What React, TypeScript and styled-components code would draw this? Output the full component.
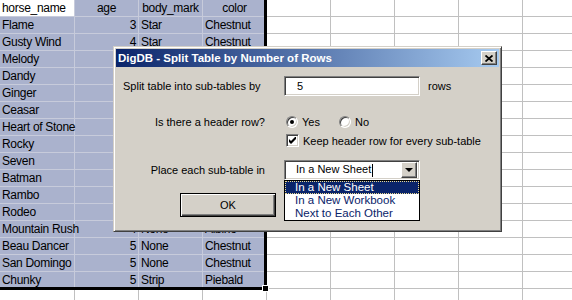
import React from 'react'
import styled, { createGlobalStyle, css } from 'styled-components'

const GlobalStyle = createGlobalStyle`
  html, body {
    margin: 0;
    padding: 0;
    background: #ffffff;
    overflow: hidden;
  }
`

const sunken = css`
  border: 1px solid;
  border-color: #808080 #ffffff #ffffff #808080;
  box-shadow: inset 1px 1px 0 #404040, inset -1px -1px 0 #d4d0c8;
`

const raised = css`
  border: 1px solid;
  border-color: #ffffff #404040 #404040 #ffffff;
  box-shadow: inset -1px -1px 0 #808080, inset 1px 1px 0 #d4d0c8;
`

/* spreadsheet */
const Page = styled.div`
  position: relative;
  width: 572px;
  height: 300px;
  overflow: hidden;
`

const Sheet = styled.div`
  display: grid;
  grid-template-columns: 75px repeat(8, 64px);
  grid-auto-rows: 17px;
  font-family: 'Liberation Sans', Arial, sans-serif;
  font-size: 12px;
  letter-spacing: -0.3px;
  color: #000;
`

const Cell = styled.div<{ $selected?: boolean; $active?: boolean; $align?: 'left' | 'right' | 'center'; $spill?: boolean }>`
  position: relative;
  box-sizing: border-box;
  border-right: 1px solid ${(p) => (p.$selected ? '#c7cbdb' : '#c0c0c0')};
  border-bottom: 1px solid ${(p) => (p.$selected ? '#c7cbdb' : '#c0c0c0')};
  background: ${(p) => (p.$active ? '#ffffff' : p.$selected ? '#aab2cd' : '#ffffff')};
  padding: 0 2px;
  line-height: 16px;
  white-space: nowrap;
  overflow: ${(p) => (p.$spill ? 'visible' : 'hidden')};
  z-index: ${(p) => (p.$spill ? 1 : 0)};
  text-align: ${(p) => p.$align || 'left'};
`

const SelectionFrame = styled.div`
  position: absolute;
  left: -3px;
  top: -3px;
  width: 264px;
  height: 287px;
  border: 3px solid #000;
  pointer-events: none;
  z-index: 2;
`

const FillHandle = styled.div`
  position: absolute;
  right: -5px;
  bottom: -5px;
  width: 5px;
  height: 5px;
  background: #000;
  border: 1px solid #fff;
`

/* dialog */
const Dialog = styled.div`
  position: absolute;
  left: 113px;
  top: 46px;
  width: 389px;
  height: 186px;
  box-sizing: border-box;
  padding: 2px;
  background: #d4d0c8;
  border: 1px solid;
  border-color: #d4d0c8 #404040 #404040 #d4d0c8;
  box-shadow: inset 1px 1px 0 #ffffff, inset -1px -1px 0 #808080;
  font-family: 'Liberation Sans', Arial, sans-serif;
  font-size: 11px;
  color: #000;
  z-index: 3;
`

const TitleBar = styled.div`
  display: flex;
  align-items: center;
  justify-content: space-between;
  height: 18px;
  padding: 0 2px;
  background: linear-gradient(to right, #0a246a, #a6caf0);
`

const Title = styled.span`
  color: #ffffff;
  font-weight: bold;
  font-size: 11.5px;
`

const CloseButton = styled.div`
  box-sizing: border-box;
  width: 16px;
  height: 14px;
  display: flex;
  align-items: center;
  justify-content: center;
  background: #d4d0c8;
  ${raised}
`

const Body = styled.div`
  display: flex;
  flex-direction: column;
  padding: 9px 0 0 7px;
`

const Row = styled.div<{ $mt?: number }>`
  display: flex;
  align-items: center;
  margin-top: ${(p) => p.$mt || 0}px;
`

const Label = styled.div<{ $right?: boolean }>`
  width: 142px;
  margin-right: 19px;
  text-align: ${(p) => (p.$right ? 'right' : 'left')};
  white-space: nowrap;
`

const TextBox = styled.div`
  box-sizing: border-box;
  width: 136px;
  height: 20px;
  display: flex;
  align-items: center;
  padding-left: 12px;
  background: #ffffff;
  ${sunken}
`

const Suffix = styled.span`
  margin-left: 8px;
`

const Option = styled.label<{ $width?: number }>`
  display: flex;
  align-items: center;
  gap: 4px;
  padding-left: 2px;
  width: ${(p) => (p.$width ? `${p.$width}px` : 'auto')};
`

const Radio = styled.span<{ $checked?: boolean }>`
  box-sizing: border-box;
  width: 12px;
  height: 12px;
  border-radius: 50%;
  background: #ffffff;
  display: flex;
  align-items: center;
  justify-content: center;
  ${sunken}
  &::after {
    content: '';
    width: 4px;
    height: 4px;
    border-radius: 50%;
    background: ${(p) => (p.$checked ? '#000' : 'transparent')};
  }
`

const CheckBox = styled.span`
  box-sizing: border-box;
  width: 13px;
  height: 13px;
  background: #ffffff;
  display: flex;
  align-items: center;
  justify-content: center;
  ${sunken}
`

const ComboWrap = styled.div`
  position: relative;
`

const Combo = styled.div`
  box-sizing: border-box;
  width: 136px;
  height: 20px;
  display: flex;
  align-items: center;
  justify-content: space-between;
  padding: 0 2px 0 11px;
  background: #ffffff;
  ${sunken}
`

const Caret = styled.span`
  display: inline-block;
  width: 1px;
  height: 13px;
  background: #000;
  vertical-align: middle;
  margin-left: 1px;
`

const DropButton = styled.div`
  box-sizing: border-box;
  width: 16px;
  height: 16px;
  display: flex;
  align-items: center;
  justify-content: center;
  background: #d4d0c8;
  ${raised}
  &::after {
    content: '';
    border-left: 4px solid transparent;
    border-right: 4px solid transparent;
    border-top: 4px solid #000;
  }
`

const List = styled.div`
  position: absolute;
  left: 0;
  top: 20px;
  width: 136px;
  box-sizing: border-box;
  border: 1px solid #000;
  background: #ffffff;
  z-index: 2;
  font-size: 11.5px;
`

const ListItem = styled.div<{ $selected?: boolean }>`
  height: 13px;
  line-height: 13px;
  padding-left: 10px;
  box-sizing: border-box;
  color: ${(p) => (p.$selected ? '#ffffff' : '#0a246a')};
  background: ${(p) => (p.$selected ? '#0a246a' : 'transparent')};
  outline: ${(p) => (p.$selected ? '1px dotted #e8d890' : 'none')};
  outline-offset: -1px;
  white-space: nowrap;
`

const OkButton = styled.div`
  box-sizing: border-box;
  width: 96px;
  height: 24px;
  margin-left: 57px;
  display: flex;
  align-items: center;
  justify-content: center;
  border: 1px solid #000;
  background: #d4d0c8;
  box-shadow: inset 1px 1px 0 #ffffff, inset -1px -1px 0 #404040, inset -2px -2px 0 #808080;
`

type Horse = [string, number, string, string]

const horses: Horse[] = [
  ['Flame', 3, 'Star', 'Chestnut'],
  ['Gusty Wind', 4, 'Star', 'Chestnut'],
  ['Melody', 2, 'Blaze', 'Bay'],
  ['Dandy', 3, 'Blaze', 'Bay'],
  ['Ginger', 2, 'Snip', 'Chestnut'],
  ['Ceasar', 6, 'Snip', 'Grey'],
  ['Heart of Stone', 4, 'Star', 'Black'],
  ['Rocky', 3, 'None', 'Bay'],
  ['Seven', 7, 'Blaze', 'Grey'],
  ['Batman', 5, 'Star', 'Black'],
  ['Rambo', 4, 'Snip', 'Bay'],
  ['Rodeo', 3, 'None', 'Dun'],
  ['Mountain Rush', 4, 'None', 'Albino'],
  ['Beau Dancer', 5, 'None', 'Chestnut'],
  ['San Domingo', 5, 'None', 'Chestnut'],
  ['Chunky', 5, 'Strip', 'Piebald'],
]

const EMPTY_COLS = 5

function EmptyCells() {
  return (
    <>
      {Array.from({ length: EMPTY_COLS }).map((_, i) => (
        <Cell key={i} />
      ))}
    </>
  )
}

export default function App() {
  return (
    <Page>
      <GlobalStyle />
      <Sheet>
        <Cell $selected $active>horse_name</Cell>
        <Cell $selected $align='center'>age</Cell>
        <Cell $selected $align='center'>body_mark</Cell>
        <Cell $selected $align='center'>color</Cell>
        <EmptyCells />
        {horses.map((h) => (
          <React.Fragment key={h[0]}>
            <Cell $selected $spill>{h[0]}</Cell>
            <Cell $selected $align='right'>{h[1]}</Cell>
            <Cell $selected>{h[2]}</Cell>
            <Cell $selected>{h[3]}</Cell>
            <EmptyCells />
          </React.Fragment>
        ))}
        <Cell />
        <Cell />
        <Cell />
        <Cell />
        <EmptyCells />
      </Sheet>

      <SelectionFrame>
        <FillHandle />
      </SelectionFrame>

      <Dialog>
        <TitleBar>
          <Title>DigDB - Split Table by Number of Rows</Title>
          <CloseButton>
            <svg width='8' height='7' viewBox='0 0 8 7'>
              <path d='M0.5 0.5 L7.5 6.5 M7.5 0.5 L0.5 6.5' stroke='#000' strokeWidth='1.8' />
            </svg>
          </CloseButton>
        </TitleBar>

        <Body>
          <Row>
            <Label>Split table into sub-tables by</Label>
            <TextBox>5</TextBox>
            <Suffix>rows</Suffix>
          </Row>

          <Row $mt={20}>
            <Label $right>Is there a header row?</Label>
            <Option $width={51}>
              <Radio $checked />
              Yes
            </Option>
            <Option>
              <Radio />
              No
            </Option>
          </Row>

          <Row $mt={6}>
            <Label />
            <Option>
              <CheckBox>
                <svg width='7' height='7' viewBox='0 0 7 7'>
                  <path d='M0 2 L2 4 L7 -1 L7 2 L2 7 L0 5 Z' fill='#000' />
                </svg>
              </CheckBox>
              Keep header row for every sub-table
            </Option>
          </Row>

          <Row $mt={13}>
            <Label $right>Place each sub-table in</Label>
            <ComboWrap>
              <Combo>
                <span>
                  In a New Sheet
                  <Caret />
                </span>
                <DropButton />
              </Combo>
              <List>
                <ListItem $selected>In a New Sheet</ListItem>
                <ListItem>In a New Workbook</ListItem>
                <ListItem>Next to Each Other</ListItem>
              </List>
            </ComboWrap>
          </Row>

          <Row $mt={13}>
            <OkButton>OK</OkButton>
          </Row>
        </Body>
      </Dialog>
    </Page>
  )
}
